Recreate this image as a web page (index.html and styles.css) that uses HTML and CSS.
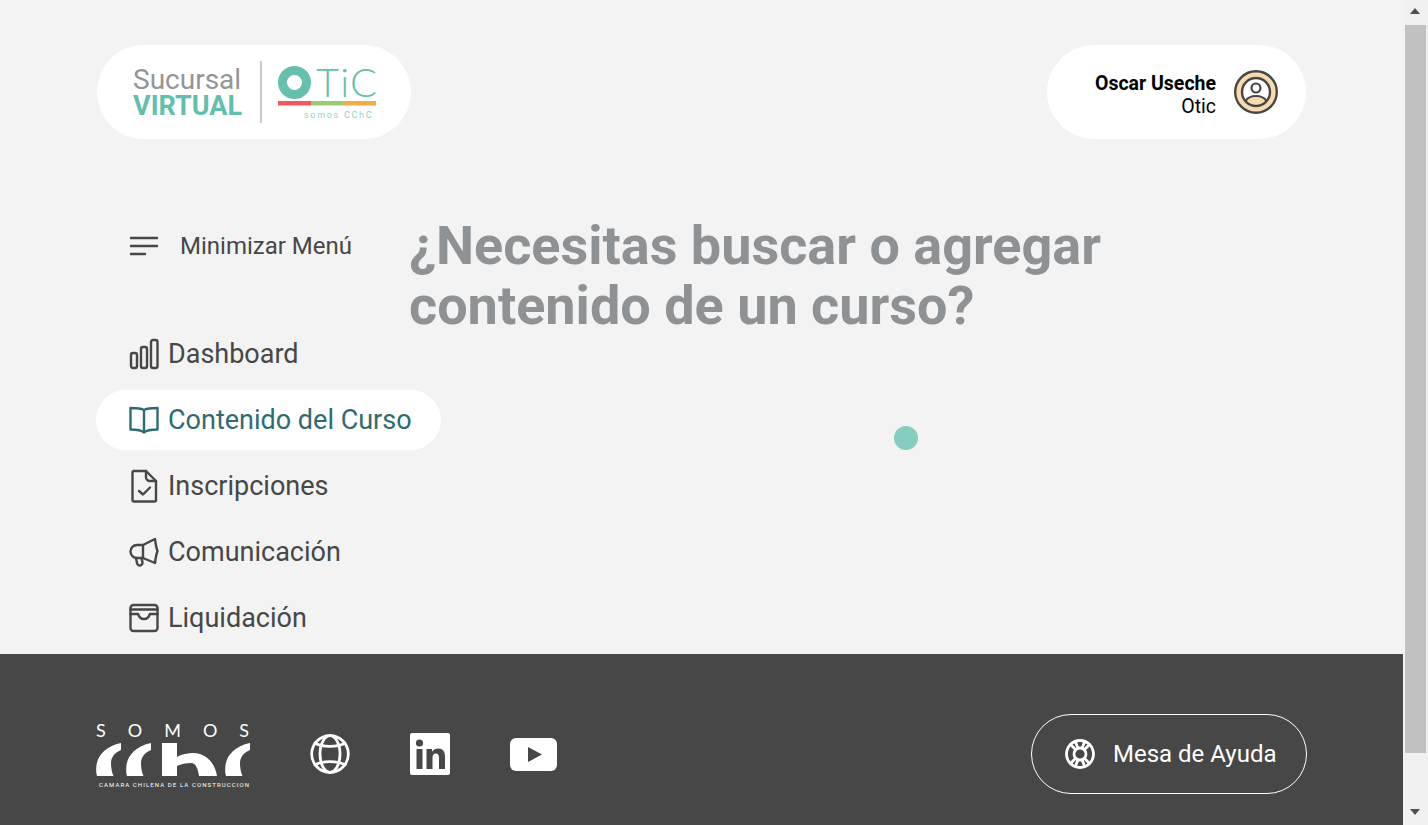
FILE: index.html

```html
<!DOCTYPE html>
<html lang="es">
<head>
  <meta charset="UTF-8">
  <title>Sucursal Virtual - OTIC</title>
  <link rel="stylesheet" href="styles.css">
</head>
<body>
  <div class="page">
    <div class="main">
      <header class="header">
        <div class="logo-pill">
          <div class="logo-text">
            <span class="logo-sucursal">Sucursal</span>
            <span class="logo-virtual">VIRTUAL</span>
          </div>
          <div class="logo-divider"></div>
          <svg class="logo-otic" width="100" height="56" viewBox="0 0 100 56">
            <circle cx="16.5" cy="17.5" r="12" fill="none" stroke="#66c0ae" stroke-width="9"/>
            <text class="otic-letters" x="38" y="32">TiC</text>
            <rect x="0" y="36" width="33" height="4.5" fill="#ee5a5e"/>
            <rect x="33" y="36" width="32" height="4.5" fill="#9ccb76"/>
            <rect x="65" y="36" width="33" height="4.5" fill="#f4ab45"/>
            <text class="otic-somos" x="26" y="53">somos CChC</text>
          </svg>
        </div>

        <div class="user-pill">
          <div class="user-text">
            <span class="user-name">Oscar Useche</span>
            <span class="user-org">Otic</span>
          </div>
          <svg width="44" height="44" viewBox="0 0 44 44">
            <circle cx="22" cy="22" r="20.8" fill="#f8dcb0" stroke="#474747" stroke-width="2.4"/>
            <circle cx="22" cy="22" r="14" fill="#fff"/>
            <path d="M11.5 31 C14 27 18 26 22 26 C26 26 30 27 32.5 31 C30 34.5 26 36 22 36 C18 36 14 34.5 11.5 31 Z" fill="#f8dcb0"/>
            <circle cx="22" cy="22" r="14" fill="none" stroke="#474747" stroke-width="2.4"/>
            <circle cx="22" cy="18" r="4.5" fill="none" stroke="#474747" stroke-width="2.2"/>
            <path d="M11.5 31 C14 27 18 26 22 26 C26 26 30 27 32.5 31" fill="none" stroke="#474747" stroke-width="2.2"/>
          </svg>
        </div>
      </header>

      <div class="body-row">
        <aside class="sidebar">
          <div class="menu-toggle">
            <svg width="30" height="20" viewBox="0 0 30 20" class="icon">
              <path d="M2 2H28M2 10H28M2 18H16"/>
            </svg>
            <span>Minimizar Menú</span>
          </div>

          <nav class="nav">
            <a class="nav-item">
              <svg width="30" height="34" viewBox="0 0 30 34" class="icon">
                <rect x="2" y="16" width="6" height="15" rx="2"/>
                <rect x="12" y="10" width="6" height="21" rx="2"/>
                <rect x="22" y="3" width="6.5" height="28" rx="2"/>
              </svg>
              <span>Dashboard</span>
            </a>
            <a class="nav-item active">
              <svg width="30" height="34" viewBox="0 0 30 34" class="icon">
                <path d="M15 7 C12 5 7 5 1.5 5 V26.5 C7 26.5 12 26.5 15 29.5 C18 26.5 23 26.5 28.5 26.5 V5 C23 5 18 5 15 7 Z M15 7 V29.5"/>
              </svg>
              <span>Contenido del Curso</span>
            </a>
            <a class="nav-item">
              <svg width="30" height="34" viewBox="0 0 30 34" class="icon">
                <path d="M5 2 H17 L27 12 V31 A1.5 1.5 0 0 1 25.5 32.5 H5 A1.5 1.5 0 0 1 3.5 31 V3.5 A1.5 1.5 0 0 1 5 2 Z"/>
                <path d="M17 2 V8 A4 4 0 0 0 21 12 H27"/>
                <path d="M10 22 L14 25.5 L21 18.5"/>
              </svg>
              <span>Inscripciones</span>
            </a>
            <a class="nav-item">
              <svg width="30" height="34" viewBox="0 0 30 34" class="icon">
                <path d="M14 10 L26 4 C26.5 8 27 12 28.5 16 C27 20 26.5 24 26 28 L14 23 Z"/>
                <path d="M14 10 H8 A6.5 6.5 0 0 0 8 23 H14"/>
                <path d="M7 23 L8 28 A2.7 2.7 0 0 0 13.5 27.5 L12.5 23"/>
              </svg>
              <span>Comunicación</span>
            </a>
            <a class="nav-item">
              <svg width="30" height="34" viewBox="0 0 30 34" class="icon">
                <rect x="1.5" y="4" width="27" height="26" rx="3"/>
                <path d="M1.5 8.5 H28.5"/>
                <path d="M1.5 13 H9 C10 16 12 18 15 18 C18 18 20 16 21 13 H28.5"/>
              </svg>
              <span>Liquidación</span>
            </a>
          </nav>
        </aside>

        <section class="content">
          <h1>¿Necesitas buscar o agregar contenido de un curso?</h1>
          <div class="loader"><div class="loader-dot"></div></div>
        </section>
      </div>

      <footer class="footer">
        <div class="footer-left">
          <div class="cchc-logo">
            <div class="somos">SOMOS</div>
            <svg width="154" height="33" viewBox="0 0 154 33" class="cchc-mark">
              <path d="M25 0 V7 C18 10 15 15 15 20 C15 25 16 30 17.5 33 H1 C0 30 0 26 0.5 22 C2 12 10 3 25 0 Z"/>
              <path transform="translate(30 0)" d="M25 0 V7 C18 10 15 15 15 20 C15 25 16 30 17.5 33 H1 C0 30 0 26 0.5 22 C2 12 10 3 25 0 Z"/>
              <path d="M66 0 H81 V14 C86 11 92 10 97 10 C110 10 119 20 121 33 H103 C102 26 100 20 95 20 C90 20 85 21 81 23 V33 H66 Z"/>
              <path transform="translate(129 0)" d="M25 0 V7 C18 10 15 15 15 20 C15 25 16 30 17.5 33 H1 C0 30 0 26 0.5 22 C2 12 10 3 25 0 Z"/>
            </svg>
            <div class="cchc-sub">CAMARA CHILENA DE LA CONSTRUCCION</div>
          </div>

          <svg width="40" height="40" viewBox="0 0 40 40" class="icon-white globe">
            <circle cx="20" cy="20" r="18.3"/>
            <ellipse cx="20" cy="20" rx="10" ry="18.3"/>
            <path d="M5 9 C12 13.5 28 13.5 35 9"/>
            <path d="M5 31 C12 26.5 28 26.5 35 31"/>
          </svg>

          <svg width="40" height="42" viewBox="0 0 40 42" class="linkedin">
            <rect width="40" height="42" rx="2" fill="#fff"/>
            <circle cx="9.5" cy="10" r="3.6" fill="#474747"/>
            <rect x="6.5" y="16" width="6" height="20" fill="#474747"/>
            <path d="M16.5 16 H22 V18.8 C23.2 16.8 25.3 15.5 28 15.5 C33 15.5 35 18.6 35 23.6 V36 H29 V25 C29 22.4 28.2 20.6 25.8 20.6 C23.4 20.6 22.5 22.6 22.5 25 V36 H16.5 Z" fill="#474747"/>
          </svg>

          <svg width="47" height="33" viewBox="0 0 47 33" class="youtube">
            <rect width="47" height="33" rx="6" fill="#fff"/>
            <path d="M18 9 L32 16.5 L18 24 Z" fill="#474747"/>
          </svg>
        </div>

        <a class="help-btn">
          <svg width="32" height="32" viewBox="0 0 32 32" class="icon-white ring">
            <circle cx="16" cy="16" r="13.5"/>
            <circle cx="16" cy="16" r="6"/>
            <path d="M6.5 6.5 L11.7 11.7 M11.5 4 L14 10.3 M25.5 6.5 L20.3 11.7 M20.5 4 L18 10.3 M6.5 25.5 L11.7 20.3 M11.5 28 L14 21.7 M25.5 25.5 L20.3 20.3 M20.5 28 L18 21.7"/>
          </svg>
          <span>Mesa de Ayuda</span>
        </a>
      </footer>
    </div>

    <div class="scrollbar">
      <div class="arrow-up"></div>
      <div class="thumb"></div>
      <div class="arrow-down"></div>
    </div>
  </div>
</body>
</html>
```

FILE: styles.css

```css
* {
  box-sizing: border-box;
}
html, body {
  margin: 0;
  height: 100%;
  overflow: hidden;
}
body {
  font-family: Roboto, "Liberation Sans", sans-serif;
  background-color: #f3f3f3;
  color: #474747;
}
.page {
  display: flex;
  height: 825px;
}
.main {
  flex: 1;
  display: flex;
  flex-direction: column;
  min-width: 0;
}

/* header */
.header {
  display: flex;
  justify-content: space-between;
  padding: 45px 97px 0;
}
.logo-pill {
  display: flex;
  align-items: center;
  width: 314px;
  height: 94px;
  padding-left: 36px;
  background: white;
  border-radius: 47px;
}
.logo-text {
  display: flex;
  flex-direction: column;
  width: 110px;
  padding-top: 1px;
  line-height: 26px;
  white-space: nowrap;
}
.logo-sucursal {
  color: #939598;
  font-size: 28px;
}
.logo-virtual {
  color: #62bfad;
  font-size: 27px;
  font-weight: 700;
}
.logo-divider {
  width: 2px;
  height: 62px;
  margin: 0 16px 0 17px;
  background: #c9c9c9;
}
.logo-otic {
  margin-top: 2px;
  overflow: visible;
}
.otic-letters {
  font-family: Lato, sans-serif;
  font-weight: 300;
  font-size: 40px;
  letter-spacing: 1.2px;
  fill: #66c0ae;
}
.otic-somos {
  font-family: Roboto, sans-serif;
  font-size: 9px;
  letter-spacing: 1.7px;
  fill: #8dd2c4;
}
.user-pill {
  display: flex;
  align-items: center;
  justify-content: flex-end;
  gap: 18px;
  width: 259px;
  height: 94px;
  padding-right: 28px;
  background: white;
  border-radius: 47px;
}
.user-text {
  display: flex;
  flex-direction: column;
  align-items: flex-end;
  margin-top: 6px;
  color: black;
  font-size: 19.5px;
  line-height: 23px;
}
.user-name {
  font-weight: 700;
}

/* sidebar + content */
.body-row {
  flex: 1;
  display: grid;
  grid-template-columns: 345px 1fr;
  margin-top: 77px;
  padding-left: 96px;
  min-height: 0;
}
.sidebar {
  padding-top: 15px;
}
.icon {
  flex: none;
  fill: none;
  stroke: currentColor;
  stroke-width: 2.4;
  stroke-linecap: round;
  stroke-linejoin: round;
}
.menu-toggle {
  display: flex;
  align-items: center;
  gap: 21px;
  height: 30px;
  padding-left: 33px;
  font-size: 24px;
}
.nav {
  display: flex;
  flex-direction: column;
  gap: 6px;
  margin-top: 63px;
}
.nav-item {
  display: flex;
  align-items: center;
  gap: 9px;
  height: 60px;
  padding-left: 33px;
  border-radius: 30px;
  font-size: 27px;
}
.nav-item.active {
  background: white;
  color: #2f6b73;
}
.content {
  margin-left: -32px;
}
h1 {
  margin: 0;
  max-width: 720px;
  color: #8f9294;
  font-size: 54px;
  line-height: 60px;
  font-weight: 700;
}
.loader {
  display: flex;
  justify-content: center;
  margin-top: 90px;
}
.loader-dot {
  width: 24px;
  height: 24px;
  border-radius: 50%;
  background: #84cdbf;
}

/* footer */
.footer {
  display: flex;
  align-items: center;
  justify-content: space-between;
  height: 171px;
  padding: 60px 96px 31px;
  background-color: #474747;
  color: white;
}
.footer-left {
  display: flex;
  align-items: center;
}
.cchc-logo {
  display: flex;
  flex-direction: column;
  width: 154px;
}
.somos {
  font-family: "Lato", sans-serif;
  font-size: 18px;
  line-height: 18px;
  letter-spacing: 22px;
  white-space: nowrap;
}
.cchc-mark {
  display: block;
  margin-top: 4px;
  fill: white;
}
.cchc-sub {
  margin-top: 5px;
  padding-left: 3px;
  font-size: 6px;
  line-height: 7px;
  letter-spacing: 1.1px;
  white-space: nowrap;
}
.icon-white {
  flex: none;
  fill: none;
  stroke: white;
  stroke-width: 2.8;
  stroke-linecap: round;
}
.globe {
  margin-left: 60px;
}
.linkedin {
  margin-left: 60px;
}
.youtube {
  margin-left: 60px;
}
.help-btn {
  display: flex;
  align-items: center;
  gap: 17px;
  width: 276px;
  height: 80px;
  padding-left: 32px;
  border: 1px solid white;
  border-radius: 40px;
  font-size: 24px;
}

/* fake browser scrollbar */
.scrollbar {
  position: relative;
  width: 25px;
  background: #f1f1f1;
}
.thumb {
  position: absolute;
  top: 25px;
  left: 2px;
  width: 21px;
  height: 728px;
  background: #c1c1c1;
}
.arrow-up, .arrow-down {
  position: absolute;
  left: 7px;
  border-left: 5.5px solid transparent;
  border-right: 5.5px solid transparent;
}
.arrow-up {
  top: 8px;
  border-bottom: 6px solid #505050;
}
.arrow-down {
  bottom: 10px;
  border-top: 6px solid #505050;
}
```
